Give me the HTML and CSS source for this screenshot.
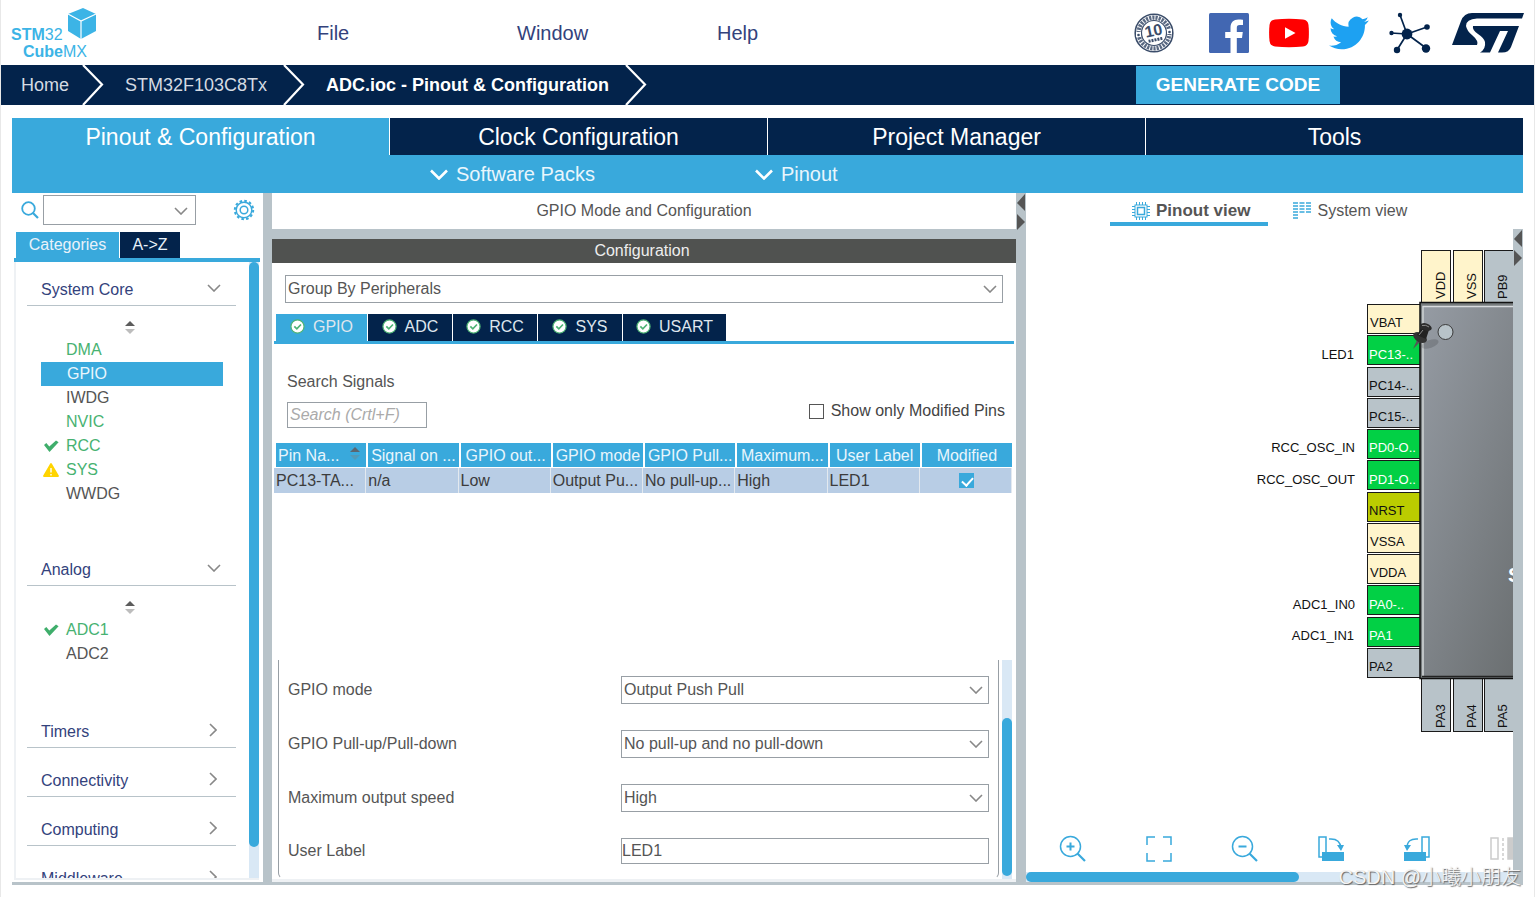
FILE: index.html
```html
<!DOCTYPE html>
<html lang="en">
<head>
<meta charset="utf-8">
<title>STM32CubeMX - ADC.ioc</title>
<link rel="stylesheet" href="styles.css">
</head>
<body>
<svg class="defs" aria-hidden="true">
  <symbol id="chev-down" viewBox="0 0 14 8"><path d="M1 1l6 6 6-6" fill="none" stroke="currentColor" stroke-width="1.6"/></symbol>
  <symbol id="chev-right" viewBox="0 0 8 14"><path d="M1 1l6 6-6 6" fill="none" stroke="currentColor" stroke-width="1.6"/></symbol>
  <symbol id="sort" viewBox="0 0 10 13"><path d="M5 0l5 5H0z" fill="#5c5c5c"/><path d="M0 8h10l-5 5z" fill="#bdbdbd"/></symbol>
  <symbol id="sort-head" viewBox="0 0 10 13"><path d="M5 0l5 5H0z" fill="#5c6670"/><path d="M0 8h10l-5 5z" fill="#5299b8"/></symbol>
  <symbol id="tick" viewBox="0 0 16 13"><path d="M1 5.5L3.3 3.6 6.3 7 13 1 15.6 2.8 6.5 12.4z" fill="#3fae6b"/></symbol>
  <symbol id="ok" viewBox="0 0 16 16"><circle cx="8" cy="8" r="7" fill="#fff" stroke="#4db374" stroke-width="1.3"/><path d="M4.6 7.8l2.700 2.700 4.400-4.600" fill="none" stroke="#4db374" stroke-width="1.800"/></symbol>
</svg>
<div class="app">
  <header class="topbar">
    <svg class="logo" viewBox="0 0 90 56" role="img" aria-label="STM32 CubeMX">
      <path d="M58 9L73 3l13 6v17l-15 8-13-8z" fill="#3cb4e6"/>
      <path d="M58 9l13 7 15-7M71 16v18" fill="none" stroke="#fff" stroke-width="1.200"/>
      <text x="1" y="35" class="logo-text"><tspan class="logo-bold">STM</tspan>32</text>
      <text x="13" y="52" class="logo-text"><tspan class="logo-bold">Cube</tspan>MX</text>
    </svg>
    <nav class="menu">
      <a href="#">File</a><a href="#">Window</a><a href="#">Help</a>
    </nav>
    <div class="social">
      <svg width="40" height="40" viewBox="0 0 40 40" role="img" aria-label="10 years">
        <circle cx="20" cy="20" r="18.800" fill="#fff" stroke="#3b4d6a" stroke-width="1.600"/>
        <circle cx="20" cy="20" r="15.400" fill="none" stroke="#5a6982" stroke-width="4.200" stroke-dasharray="2.200 1"/>
        <circle cx="20" cy="20" r="12.500" fill="#fff" stroke="#3b4d6a" stroke-width="1.200"/>
        <path d="M2 19h5v5H2zM33 16h5v5h-5z" fill="#fff"/><circle cx="4.500" cy="22" r="1.300" fill="#3b4d6a"/><circle cx="35.500" cy="19" r="1.300" fill="#3b4d6a"/>
        <g transform="rotate(-12 20 20)"><text x="20" y="23" class="badge-num">10</text><path d="M13 27h2m1 0h2m1 0h2m1 0h2m1 0h2" stroke="#3b4d6a" stroke-width="3"/></g>
      </svg>
      <svg width="40" height="40" viewBox="0 0 40 40" role="img" aria-label="Facebook">
        <rect width="40" height="40" rx="1.500" fill="#4267b2"/>
        <path d="M21.500 40V25h-5.300v-6h5.300v-4.500c0-5.200 3.200-8 7.800-8 1.700 0 3.700.2 4.700.3v5.300h-3.200c-2.500 0-3 1.200-3 2.900v4h6l-.8 6h-5.200v15z" fill="#fff"/>
      </svg>
      <svg width="40" height="40" viewBox="0 0 40 40" role="img" aria-label="YouTube">
        <path d="M6 6.500Q20 5 34 6.500q5 .6 5.500 5.500.8 8 0 16-.6 4.800-5.500 5.500-14 1.500-28 0Q1 32.800.5 28q-.8-8 0-16Q1 7.100 6 6.500z" fill="#f00"/><path d="M16 14.300l10.500 5.700L16 25.700z" fill="#fff"/>
      </svg>
      <svg width="40" height="40" viewBox="0 0 24 24" role="img" aria-label="Twitter">
        <path d="M23.950 4.570a10 10 0 0 1-2.820.77 4.960 4.960 0 0 0 2.160-2.720c-.95.560-2 .960-3.130 1.190a4.920 4.920 0 0 0-8.380 4.480C7.690 8.100 4.070 6.130 1.640 3.160a4.820 4.820 0 0 0-.67 2.480c0 1.710.87 3.210 2.190 4.100a4.900 4.900 0 0 1-2.230-.62v.06a4.920 4.920 0 0 0 3.950 4.830 5 5 0 0 1-2.210.08 4.940 4.940 0 0 0 4.600 3.420A9.870 9.870 0 0 1 0 19.540a14 14 0 0 0 7.560 2.210c9.050 0 14-7.500 14-13.980 0-.21 0-.42-.02-.63a9.940 9.940 0 0 0 2.410-2.570z" fill="#1da1f2"/>
      </svg>
      <svg width="42" height="42" viewBox="0 0 42 42" role="img" aria-label="Community">
        <path d="M18 22L11 3M18 22L38 15M18 22L2 21M18 22L8 38M18 22L37 36" stroke="#03234b" stroke-width="1.700"/>
        <g fill="#03234b"><circle cx="18" cy="22" r="5.400"/><circle cx="11" cy="3" r="2.200"/><circle cx="38" cy="15" r="2.800"/><circle cx="2.500" cy="21" r="2.200"/><circle cx="8" cy="38" r="3.200"/><circle cx="37" cy="36.500" r="4.200"/></g>
      </svg>
      <svg class="st" width="72" height="40" viewBox="0 0 72 40" role="img" aria-label="ST">
        <path d="M0 32L9 8Q12 0 20 0H72L70 5.500H25Q14 6 14 13 15 18 20 22 27 28 25 32z" fill="#03234b"/>
        <path d="M21 13H67L59 34Q57 39.500 50 39.500H46L56 18H48L38 39.500H28Q34 36 33 29 32 25 26 21 20 17 21 13z" fill="#03234b"/>
      </svg>
    </div>
  </header>

  <nav class="crumbs">
    <a href="#" class="crumb c-home">Home</a>
    <svg class="sep" viewBox="0 0 22 40"><path d="M1 0l19 19.500L1 40" fill="none" stroke="#fff" stroke-width="2.200"/></svg>
    <a href="#" class="crumb">STM32F103C8Tx</a>
    <svg class="sep" viewBox="0 0 22 40"><path d="M1 0l19 19.500L1 40" fill="none" stroke="#fff" stroke-width="2.200"/></svg>
    <a href="#" class="crumb current">ADC.ioc - Pinout &amp; Configuration</a>
    <svg class="sep" viewBox="0 0 22 40"><path d="M1 0l19 19.500L1 40" fill="none" stroke="#fff" stroke-width="2.200"/></svg>
    <button class="generate">GENERATE CODE</button>
  </nav>

  <main class="main">
    <div class="maintabs">
      <button class="on">Pinout &amp; Configuration</button><button>Clock Configuration</button><button>Project Manager</button><button>Tools</button>
    </div>
    <div class="subbar">
      <button><svg viewBox="0 0 18 11"><path d="M1 1.500l8 8 8-8" fill="none" stroke="#fff" stroke-width="2.600"/></svg>Software Packs</button>
      <button><svg viewBox="0 0 18 11"><path d="M1 1.500l8 8 8-8" fill="none" stroke="#fff" stroke-width="2.600"/></svg>Pinout</button>
    </div>

    <div class="work">
      <aside class="side">
        <div class="side-search">
          <svg class="mag" viewBox="0 0 18 18"><circle cx="7.500" cy="7.500" r="6.300" fill="none" stroke="#39a9dc" stroke-width="1.800"/><path d="M12 12l5 5" stroke="#39a9dc" stroke-width="2.200"/></svg>
          <span class="pick"><select aria-label="Search peripheral"><option></option></select><svg><use href="#chev-down"/></svg></span>
          <button class="gear" aria-label="Settings"><svg viewBox="0 0 22 22" fill="none" stroke="#39a9dc"><circle cx="11" cy="11" r="9.200" stroke-width="2" stroke-dasharray="2.600 2.217"/><circle cx="11" cy="11" r="7.800" stroke-width="1.400"/><circle cx="11" cy="11" r="3.800" stroke-width="1.500"/></svg></button>
        </div>
        <div class="side-tabs"><button class="on">Categories</button><button>A-&gt;Z</button></div>
        <div class="side-body">
          <div class="tree">
            <section class="open">
              <h3>System Core<svg class="cd"><use href="#chev-down"/></svg></h3>
              <svg class="sort"><use href="#sort"/></svg>
              <ul>
                <li class="green">DMA</li>
                <li class="sel">GPIO</li>
                <li>IWDG</li>
                <li class="green">NVIC</li>
                <li class="green"><svg class="mark"><use href="#tick"/></svg>RCC</li>
                <li class="green"><svg class="mark" viewBox="0 0 16 14"><path d="M8 1l7 12H1z" fill="#ffd400" stroke="#ffd400" stroke-width="1.800" stroke-linejoin="round"/><path d="M8 5v4.500M8 11v1.500" stroke="#fff" stroke-width="1.400"/></svg>SYS</li>
                <li>WWDG</li>
              </ul>
            </section>
            <section class="open last">
              <h3>Analog<svg class="cd"><use href="#chev-down"/></svg></h3>
              <svg class="sort"><use href="#sort"/></svg>
              <ul>
                <li class="green"><svg class="mark"><use href="#tick"/></svg>ADC1</li>
                <li>ADC2</li>
              </ul>
            </section>
            <section><h3>Timers<svg class="cr"><use href="#chev-right"/></svg></h3></section>
            <section><h3>Connectivity<svg class="cr"><use href="#chev-right"/></svg></h3></section>
            <section><h3>Computing<svg class="cr"><use href="#chev-right"/></svg></h3></section>
            <section><h3>Middleware<svg class="cr"><use href="#chev-right"/></svg></h3></section>
          </div>
          <div class="vbar side-bar"><i></i></div>
        </div>
      </aside>

      <div class="split first"></div>

      <section class="mid">
        <h2 class="mid-title">GPIO Mode and Configuration</h2>
        <div class="mid-gap"></div>
        <h2 class="mid-head">Configuration</h2>
        <div class="mid-body">
          <span class="pick group"><select aria-label="Group by"><option>Group By Peripherals</option></select><svg><use href="#chev-down"/></svg></span>
          <div class="ptabs">
            <button class="on"><svg><use href="#ok"/></svg>GPIO</button><button><svg><use href="#ok"/></svg>ADC</button><button><svg><use href="#ok"/></svg>RCC</button><button><svg><use href="#ok"/></svg>SYS</button><button class="wide"><svg><use href="#ok"/></svg>USART</button>
          </div>
          <div class="signals">
            <div class="find"><label for="sig">Search Signals</label><input id="sig" type="text" placeholder="Search (Crtl+F)"></div>
            <label class="only"><input type="checkbox">Show only Modified Pins</label>
          </div>
          <table class="pins">
            <thead><tr><th class="sorted">Pin Na...<svg><use href="#sort-head"/></svg></th><th>Signal on ...</th><th>GPIO out...</th><th>GPIO mode</th><th>GPIO Pull...</th><th>Maximum...</th><th>User Label</th><th>Modified</th></tr></thead>
            <tbody><tr><td>PC13-TA...</td><td>n/a</td><td>Low</td><td>Output Pu...</td><td>No pull-up...</td><td>High</td><td>LED1</td><td class="chk"><input type="checkbox" checked aria-label="Modified"></td></tr></tbody>
          </table>
          <div class="detail">
            <form class="form">
              <label for="f1">GPIO mode</label>
              <span class="pick"><select id="f1"><option>Output Push Pull</option></select><svg><use href="#chev-down"/></svg></span>
              <label for="f2">GPIO Pull-up/Pull-down</label>
              <span class="pick"><select id="f2"><option>No pull-up and no pull-down</option></select><svg><use href="#chev-down"/></svg></span>
              <label for="f3">Maximum output speed</label>
              <span class="pick"><select id="f3"><option>High</option></select><svg><use href="#chev-down"/></svg></span>
              <label for="f4">User Label</label>
              <input id="f4" type="text" value="LED1">
            </form>
            <div class="vbar detail-bar"><i></i></div>
          </div>
        </div>
      </section>

      <div class="split"><svg class="arrows" viewBox="0 0 10 38"><path d="M9 1v17L1 10zM1 21v16l8-8z" fill="#555"/></svg></div>

      <section class="view">
        <div class="view-tabs">
          <button class="on"><svg viewBox="0 0 18 18" fill="none" stroke="#39a9dc"><rect x="3" y="3" width="12" height="12"/><rect x="5.500" y="5.500" width="7" height="7" stroke-width="1.500"/><path d="M4.500 0v3M7.500 0v3M10.500 0v3M13.500 0v3M4.500 15v3M7.500 15v3M10.500 15v3M13.500 15v3M0 4.500h3M0 7.500h3M0 10.500h3M0 13.500h3M15 4.500h3M15 7.500h3M15 10.500h3M15 13.500h3"/></svg>Pinout view</button>
          <button><svg viewBox="0 0 18 18" stroke="#39a9dc" stroke-width="1.400"><path d="M0 1h5M0 4h5M0 7h5M0 10h5M0 13h5M0 16h5M6.500 1h5M6.500 4h5M6.500 7h5M6.500 10h5M13 1h5M13 4h5M13 7h5M13 10h5"/></svg>System view</button>
        </div>
        <div class="view-row">
          <div class="canvas">
            <svg class="chip" width="273" height="490" viewBox="1240 245 273 490">
              <defs><linearGradient id="body" x1="0" y1="0" x2="1" y2="1"><stop offset="0" stop-color="#959ba3"/><stop offset="1" stop-color="#65696a"/></linearGradient></defs>
              <g stroke="#1a1a1a">
                <rect x="1421.500" y="250.500" width="29" height="55" fill="#fff4cb"/><rect x="1453.500" y="250.500" width="29" height="55" fill="#fff4cb"/><rect x="1484.500" y="250.500" width="29" height="55" fill="#b8c3c9"/>
                <rect x="1421.500" y="678.500" width="29" height="53" fill="#b8c3c9"/><rect x="1453.500" y="678.500" width="29" height="53" fill="#b8c3c9"/><rect x="1484.500" y="678.500" width="29" height="53" fill="#b8c3c9"/>
                <rect x="1367.500" y="304.500" width="54" height="29" fill="#fff4cb"/>
                <rect x="1367.500" y="335.500" width="54" height="29" fill="#02d045"/>
                <rect x="1367.500" y="367.500" width="54" height="29" fill="#b8c3c9"/>
                <rect x="1367.500" y="398.500" width="54" height="29" fill="#b8c3c9"/>
                <rect x="1367.500" y="429.500" width="54" height="29" fill="#02d045"/>
                <rect x="1367.500" y="460.500" width="54" height="29" fill="#02d045"/>
                <rect x="1367.500" y="492.500" width="54" height="29" fill="#bbcc00"/>
                <rect x="1367.500" y="523.500" width="54" height="29" fill="#fff4cb"/>
                <rect x="1367.500" y="554.500" width="54" height="29" fill="#fff4cb"/>
                <rect x="1367.500" y="585.500" width="54" height="29" fill="#02d045"/>
                <rect x="1367.500" y="617.500" width="54" height="29" fill="#02d045"/>
                <rect x="1367.500" y="648.500" width="54" height="29" fill="#b8c3c9"/>
              </g>
              <rect x="1420" y="302.500" width="120" height="376" fill="#777c7e" stroke="#111" stroke-width="1.500"/>
              <rect x="1424" y="307" width="120" height="369" fill="url(#body)"/>
              <path d="M1423 676V306.500H1513" fill="none" stroke="#d8dbde" stroke-width="1.500"/>
              <path d="M1422 676.500h91" stroke="#222" stroke-width="1.500"/>
              <circle cx="1445.500" cy="332" r="7.500" fill="#b8c3c9" stroke="#3a3a3a"/>
              <ellipse cx="1430" cy="344" rx="9" ry="4" fill="#000" opacity=".15" transform="rotate(-20 1430 344)"/>
              <path d="M1417 340l-4 9 7-7z" fill="#555"/>
              <ellipse cx="1420" cy="337.500" rx="7.500" ry="4.500" fill="#333" transform="rotate(30 1420 337.500)"/>
              <path d="M1417 335l5-8 7 3-3 9z" fill="#222"/>
              <ellipse cx="1426" cy="327" rx="6" ry="3.500" fill="#2b2b2b" transform="rotate(20 1426 327)"/>
              <path d="M1422 325.500q4-1 7 1.500M1419 335l4-5" stroke="#8a8a8a" fill="none"/>
              <g class="pin">
                <text x="1370" y="327">VBAT</text><text x="1369" y="359" class="w">PC13-..</text><text x="1369" y="390">PC14-..</text><text x="1369" y="421">PC15-..</text><text x="1369" y="452" class="w">PD0-O..</text><text x="1369" y="484" class="w">PD1-O..</text><text x="1369" y="515">NRST</text><text x="1370" y="546">VSSA</text><text x="1370" y="577">VDDA</text><text x="1369" y="609" class="w">PA0-..</text><text x="1369" y="640" class="w">PA1</text><text x="1369" y="671">PA2</text>
                <text transform="translate(1445 299) rotate(-90)">VDD</text><text transform="translate(1476 299) rotate(-90)">VSS</text><text transform="translate(1507 299) rotate(-90)">PB9</text>
                <text transform="translate(1445 728) rotate(-90)">PA3</text><text transform="translate(1476 728) rotate(-90)">PA4</text><text transform="translate(1507 728) rotate(-90)">PA5</text>
              </g>
              <g class="pin end"><text x="1354" y="359">LED1</text><text x="1355" y="452">RCC_OSC_IN</text><text x="1355" y="484">RCC_OSC_OUT</text><text x="1355" y="609">ADC1_IN0</text><text x="1354" y="640">ADC1_IN1</text></g>
              <text x="1508" y="582" class="chip-name">S</text>
            </svg>
            <div class="tools">
              <button aria-label="Zoom in"><svg viewBox="0 0 28 28"><circle cx="11.500" cy="11.500" r="10"/><path d="M18.500 18.500l7.500 7.500" stroke-width="2.200"/><path d="M7.500 11.500h8M11.500 7.500v8" stroke-width="2"/></svg></button>
              <button aria-label="Fit"><svg viewBox="0 0 28 28"><path d="M2 10V2h8M18 2h8v8M26 18v8h-8M10 26H2v-8"/></svg></button>
              <button aria-label="Zoom out"><svg viewBox="0 0 28 28"><circle cx="11.500" cy="11.500" r="10"/><path d="M18.500 18.500l7.500 7.500" stroke-width="2.200"/><path d="M7.500 11.500h8" stroke-width="2"/></svg></button>
              <button aria-label="Rotate clockwise"><svg viewBox="0 0 28 28"><path d="M2 2h7v20H2zM12 4q11-1 12 9"/><path d="M5 17h22v9H5zM20 10h7l-3 6z" fill="#39a9dc" stroke="none"/></svg></button>
              <button aria-label="Rotate counter-clockwise"><svg viewBox="0 0 28 28"><path d="M19 2h7v20h-7zM15 4Q4 3 4 13"/><path d="M1 17h22v9H1zM1 10h7l-4 6z" fill="#39a9dc" stroke="none"/></svg></button>
              <button aria-label="Flip" disabled><svg viewBox="0 0 28 28"><g stroke="#ccc"><path d="M2 3h7v21H2z"/><path d="M14 3v22" stroke-dasharray="3 2"/><path d="M19 3h7v21h-7z" fill="#ccc"/></g></svg></button>
            </div>
            <div class="hbar"><i></i></div>
          </div>
          <div class="split"><svg class="arrows" viewBox="0 0 10 38"><path d="M9 1v17L1 10zM1 21v16l8-8z" fill="#555"/></svg></div>
        </div>
      </section>
    </div>
  </main>
  <div class="watermark">CSDN @小曦小朋友</div>
</div>
</body>
</html>
```
FILE: styles.css
```css
* { box-sizing: border-box; }
body {
  margin: 0;
  background: #fff;
  color: #555;
  font: 16px/20px "Liberation Sans", "Noto Sans CJK SC", Arial, sans-serif;
}
button, input, select { font: inherit; color: inherit; border: 0; background: none; padding: 0; margin: 0; border-radius: 0; }
button { cursor: pointer; }
a { text-decoration: none; color: inherit; }
h2, h3, ul { margin: 0; padding: 0; font: inherit; list-style: none; }
svg { flex: none; display: block; }
.defs { position: absolute; width: 0; height: 0; }

.app {
  position: relative;
  display: flex;
  flex-direction: column;
  height: 100vh;
  min-height: 720px;
  border-left: 1px solid #e8e8e8;
  border-right: 1px solid #e8e8e8;
  overflow: hidden;
}

/* top bar */
.topbar { display: flex; align-items: center; height: 65px; flex: none; padding: 0 10px 0 9px; }
.logo { width: 90px; height: 56px; }
.logo-text { font-size: 16px; fill: #3cb4e6; }
.logo-bold { font-weight: bold; }
.menu { display: grid; grid-template-columns: repeat(3, 200px); padding-left: 217px; color: #33427c; font-size: 20px; line-height: 24px; }
.social { display: flex; align-items: center; gap: 20px; margin-left: auto; }
.social svg:first-child { margin-right: 15px; }
.social .st { margin-left: 1px; }
.badge-num { font: bold 16px "Liberation Sans", sans-serif; fill: #3b4d6a; text-anchor: middle; }

/* breadcrumb */
.crumbs { display: flex; align-items: center; height: 40px; flex: none; background: #03234b; color: #d5dbe3; font-size: 18px; }
.crumb { padding: 0 16px 0 21px; }
.c-home { padding: 0 13px 0 20px; }
.current { color: #fff; font-weight: bold; }
.sep { width: 22px; height: 40px; }
.generate { width: 204px; height: 38px; margin: 0 194px 0 auto; background: #39a9dc; color: #fff; font-size: 19px; font-weight: bold; }

/* main tabs */
.main { display: flex; flex-direction: column; flex: 1; min-height: 0; margin: 13px 11px 12px; }
.maintabs { display: grid; grid-template-columns: repeat(4, 1fr); gap: 1px; flex: none; }
.maintabs button { height: 37px; background: #03234b; color: #fff; font-size: 23px; line-height: 36px; }
.maintabs .on, .subbar { background: #39a9dc; }
.subbar { display: flex; gap: 160px; height: 38px; flex: none; padding-left: 418px; color: #e9f6fc; font-size: 20px; }
.subbar button { display: flex; align-items: center; gap: 8px; }
.subbar svg { width: 18px; height: 11px; }

.work { display: flex; flex: 1; min-height: 0; border-bottom: 3px solid #b8c3c9; }
.split { width: 10px; flex: none; background: #b8c3c9; }
.first { width: 9px; }
.arrows { width: 10px; height: 38px; }

/* shared fields */
.pick { position: relative; display: block; }
.pick select { appearance: none; display: block; width: 100%; height: 28px; padding: 0 26px 0 2px; border: 1px solid #989fa5; background: #fff; }
.pick svg { position: absolute; right: 6px; top: 10px; width: 14px; height: 8px; color: #888; pointer-events: none; }
.vbar { width: 10px; flex: none; display: flex; background: #d9e8f5; }
.vbar i, .hbar i { display: block; border-radius: 5px; background: #39a9dc; }
.vbar i { width: 10px; }

/* left panel */
.side { display: flex; flex-direction: column; width: 251px; flex: none; padding: 2px 3px 2px 2px; }
.side-search { display: flex; align-items: center; height: 30px; flex: none; padding-left: 7px; }
.mag { width: 18px; height: 18px; margin-right: 4px; }
.side-search .pick { width: 153px; }
.side-search select { height: 30px; }
.side-search .pick svg { right: 8px; top: 12px; }
.gear { margin-left: auto; margin-right: 5px; }
.gear svg { width: 22px; height: 22px; }
.side-tabs { display: flex; gap: 1px; flex: none; margin-top: 7px; padding-left: 2px; border-bottom: 4px solid #39a9dc; }
.side-tabs button { width: 60px; height: 26px; background: #03234b; color: #e9f2fa; }
.side-tabs .on { width: 103px; background: #39a9dc; }
.side-body { display: flex; flex: 1; min-height: 0; margin-right: 1px; border-left: 2px solid #eef1f4; border-bottom: 2px solid #eef1f4; }
.tree { flex: 1; min-width: 0; overflow: hidden; padding: 0 13px 0 11px; }
.tree section { margin-bottom: 5px; }
.tree .open { margin-bottom: 36px; }
.tree .last { margin-bottom: 38px; }
.tree h3 { display: flex; align-items: center; justify-content: space-between; height: 44px; padding: 13px 15px 0 14px; border-bottom: 1px solid #b8c3c9; color: #33427c; }
.cd { width: 14px; height: 8px; margin-bottom: 5px; color: #888; }
.cr { width: 8px; height: 14px; margin: 0 4px 5px 0; color: #888; }
.tree .sort { width: 10px; height: 13px; margin: 15px 0 4px 98px; }
.tree li { position: relative; height: 24px; line-height: 24px; margin: 0 13px 0 14px; padding-left: 25px; }
.tree .green { color: #47b271; }
.tree .sel { background: #39a9dc; color: #e9f6fc; padding-left: 26px; }
.mark { position: absolute; left: 2px; top: 5px; width: 16px; height: 14px; }
.side-bar i { height: 95%; }

/* middle panel */
.mid { display: flex; flex-direction: column; flex: 744; min-width: 0; }
.mid-title, .mid-head { flex: none; text-align: center; }
.mid-title { height: 36px; line-height: 36px; }
.mid-gap { height: 10px; flex: none; background: #b8c3c9; }
.mid-head { height: 24px; line-height: 24px; padding-right: 4px; background: #505250; color: #eee; }
.mid-body { display: flex; flex-direction: column; flex: 1; min-height: 0; padding: 12px 2px 0; border-bottom: 3px solid #eef1f4; }
.group { margin: 0 11px; }
.ptabs { display: flex; gap: 1px; flex: none; margin-top: 11px; padding-left: 2px; border-bottom: 3px solid #39a9dc; }
.ptabs button { display: flex; align-items: center; justify-content: center; gap: 8px; width: 84px; height: 27px; padding-bottom: 2px; background: #03234b; color: #dfe6ee; }
.ptabs .on { width: 91px; background: #39a9dc; }
.ptabs .wide { width: 103px; }
.ptabs svg { width: 15px; height: 15px; }
.signals { display: flex; justify-content: space-between; align-items: flex-end; flex: none; padding: 28px 9px 0 13px; }
.find label { display: block; margin-bottom: 10px; }
.find input { width: 140px; height: 26px; padding: 0 2px; border: 1px solid #989fa5; font-style: italic; }
.find ::placeholder { color: #aaa; opacity: 1; }
.only { display: flex; align-items: center; gap: 7px; margin-bottom: 7px; color: #444; }
.only input, .chk input { appearance: none; width: 15px; height: 15px; border: 1px solid #555; }
.pins { flex: none; width: calc(100% - 2px); margin-top: 15px; border-collapse: separate; border-spacing: 0; table-layout: fixed; white-space: nowrap; }
.pins th, .pins td { height: 25px; padding: 0 1px; overflow: hidden; font-weight: normal; line-height: 23px; }
.pins th { background: #39a9dc; color: #e9f6fc; border-left: 2px solid #fff; border-bottom: 1px solid #fff; }
.pins td { background: #b8cde5; color: #3c3c3c; border-right: 1px solid #e3e9ef; padding-left: 2px; padding-right: 0; }
.pins .sorted { position: relative; text-align: left; padding-left: 2px; }
.sorted svg { position: absolute; right: 6px; top: 4px; width: 10px; height: 13px; }
.pins .chk { text-align: center; }
.chk input { display: block; margin: 0 auto; border: 0; background: #39a9dc; position: relative; }
.chk input::after { content: ""; position: absolute; left: 5px; top: 2px; width: 5px; height: 9px; border: solid #fff; border-width: 0 2px 2px 0; transform: rotate(42deg); }
.detail { display: flex; flex: none; height: 219px; margin-top: auto; padding: 0 2px 0 4px; gap: 3px; }
.form { flex: 1; display: grid; grid-template-columns: 333px 1fr; grid-auto-rows: 28px; row-gap: 26px; align-items: center; padding: 16px 9px 0 9px; border: 1px solid #989fa5; border-top: 0; border-radius: 0 0 6px 6px; border-bottom-color: transparent; }
.form > input { height: 26px; margin-bottom: 2px; padding: 0; border: 1px solid #989fa5; width: 100%; }
.form > label:last-of-type { margin-bottom: 2px; }
.detail-bar { align-items: flex-end; }
.detail-bar i { height: 72%; margin-bottom: 3px; }

/* right panel */
.view { display: flex; flex-direction: column; flex: 497; min-width: 0; }
.view-tabs { display: flex; flex: none; gap: 25px; height: 36px; padding: 0 0 3px 84px; }
.view-tabs button { display: flex; align-items: center; gap: 6px; height: 33px; padding-top: 5px; }
.view-tabs .on { padding: 6px 18px 0 22px; border-bottom: 4px solid #39a9dc; font-size: 17px; font-weight: bold; }
.view-tabs button + button { padding-top: 2px; }
.view-tabs svg { width: 18px; height: 18px; }
.view-row { display: flex; flex: 1; min-height: 0; }
.canvas { display: flex; flex-direction: column; flex: 1; min-width: 0; overflow: hidden; }
.chip { margin: 16px 0 0 auto; }
.pin text { font-size: 13px; fill: #111; }
.pin .w { fill: #fff; }
.end text { text-anchor: end; }
.chip-name { font-size: 20px; font-weight: bold; fill: #fff; }
.tools { display: flex; gap: 58px; margin: auto 0 9px; padding-left: 33px; }
.tools svg { width: 28px; height: 28px; fill: none; stroke: #39a9dc; stroke-width: 1.5; }
.hbar { display: flex; height: 10px; flex: none; background: #d9e8f5; }
.hbar i { width: 56%; }

.watermark { position: absolute; right: 13px; bottom: 7px; color: #f4f4f4; font: 300 20px/26px "Liberation Sans", "Noto Sans CJK SC", sans-serif; text-shadow: 1px 1px 1px #666; white-space: nowrap; }
```
